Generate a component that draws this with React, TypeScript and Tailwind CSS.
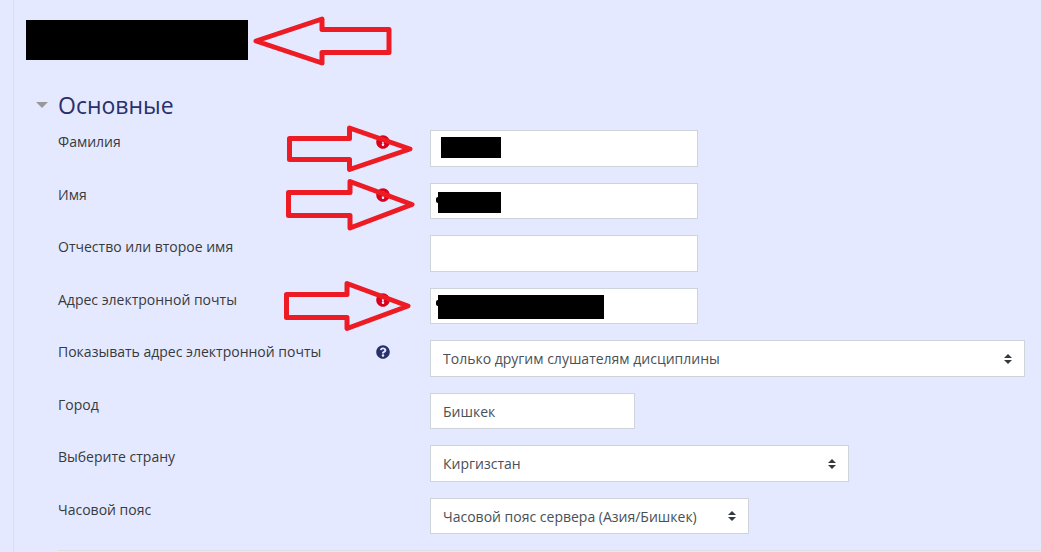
import { useState } from 'react';
import type { ReactNode } from 'react';
import { FaExclamationCircle, FaQuestionCircle } from 'react-icons/fa';

const controlClass =
  'h-full max-w-full border border-[#ced4da] bg-white px-3 text-[14px] text-[#495057] outline-none focus:border-[#80bdff]';

function Arrow({ points, className }: { points: string; className: string }) {
  return (
    <svg
      aria-hidden="true"
      width="144"
      height="56"
      viewBox="0 0 144 56"
      fill="none"
      stroke="#ed1c24"
      strokeWidth="5"
      strokeLinejoin="round"
      className={`pointer-events-none absolute z-10 ${className}`}
    >
      <polygon points={points} />
    </svg>
  );
}

function Required() {
  return (
    <span role="img" aria-label="Обязательное поле" className="text-[#d9001b]">
      <FaExclamationCircle size={14} />
    </span>
  );
}

type RowProps = {
  id: string;
  label: string;
  icon?: ReactNode;
  overlay?: ReactNode;
  children: ReactNode;
};

function Row({ id, label, icon, overlay, children }: RowProps) {
  return (
    <div className="relative grid h-9 grid-cols-[372px_minmax(0,1fr)] odd:h-[37px]">
      <div className="flex items-start justify-between pr-10">
        <label htmlFor={id} className="leading-6">
          {label}
        </label>
        <span className="flex h-6 items-center">{icon}</span>
      </div>
      <div className="relative flex">{children}</div>
      {overlay}
    </div>
  );
}

function TextField({ id, width, initial = '' }: { id: string; width: string; initial?: string }) {
  const [value, setValue] = useState(initial);
  return (
    <input
      id={id}
      type="text"
      value={value}
      onChange={(e) => setValue(e.target.value)}
      className={`${controlClass} ${width}`}
    />
  );
}

function SelectField({ id, width, option }: { id: string; width: string; option: string }) {
  return (
    <div className={`relative h-full max-w-full ${width}`}>
      <select id={id} className={`${controlClass} w-full appearance-none pr-8`}>
        <option>{option}</option>
      </select>
      <svg
        aria-hidden="true"
        viewBox="0 0 4 5"
        className="pointer-events-none absolute top-1/2 right-[13px] h-[10px] w-2 -translate-y-1/2 fill-[#343a40]"
      >
        <path d="M2 0L0 2h4zm0 5L0 3h4z" />
      </svg>
    </div>
  );
}

export default function App() {
  const [open, setOpen] = useState(true);
  return (
    <div className="min-h-screen bg-[#e5e9ff] pl-[13px] font-['Open_Sans','Noto_Sans',sans-serif] text-[14px] text-[#373a3c]">
      <main className="min-h-screen border-l border-[#dcdfea] pt-5">
        <header className="relative pl-3">
          <div className="h-10 w-[222px] bg-black" />
          <Arrow className="-top-1.5 left-[238px]" points="4,27 70,5 70,15.5 137,15.5 137,38.5 70,38.5 70,49" />
        </header>

        <form className="mt-[27px] pl-[22px]" onSubmit={(e) => e.preventDefault()}>
          <h2 className="text-[23px] leading-9 text-[#29306b]">
            <button
              type="button"
              aria-expanded={open}
              onClick={() => setOpen(!open)}
              className="flex items-center gap-2.5"
            >
              <svg aria-hidden="true" width="12" height="6" viewBox="0 0 12 6" fill="#999">
                <path d="M0 0h12L6 6z" />
              </svg>
              Основные
            </button>
          </h2>

          {open && (
            <div className="mt-[7px] ml-[22px]">
              <div className="flex flex-col gap-4 pr-4">
                <Row
                  id="lastname"
                  label="Фамилия"
                  icon={<Required />}
                  overlay={
                    <Arrow
                      className="-top-2 left-[226px]"
                      points="5.5,16.5 65.5,16.5 65.5,6 126,27 65.5,47.5 65.5,37.5 5.5,37.5"
                    />
                  }
                >
                  <TextField id="lastname" width="w-[268px]" />
                  <span className="absolute top-[7px] left-[11px] h-[21px] w-[60px] bg-black" />
                </Row>
                <Row
                  id="firstname"
                  label="Имя"
                  icon={<Required />}
                  overlay={
                    <Arrow
                      className="-top-2 left-[226px]"
                      points="4.5,17.5 66,17.5 66,6.5 128,29.5 66,53 66,40.5 4.5,40.5"
                    />
                  }
                >
                  <TextField id="firstname" width="w-[268px]" />
                  <span className="absolute top-[9px] left-2 h-[21px] w-[63px] bg-black" />
                  <span className="absolute top-3.5 left-1.5 h-1.5 w-1 rounded-full bg-black" />
                </Row>
                <Row id="middlename" label="Отчество или второе имя">
                  <TextField id="middlename" width="w-[268px]" />
                </Row>
                <Row
                  id="email"
                  label="Адрес электронной почты"
                  icon={<Required />}
                  overlay={
                    <Arrow
                      className="-top-2 left-[226px]"
                      points="2.5,14.5 63,14.5 63,3.5 124,26 63,48.5 63,37.5 2.5,37.5"
                    />
                  }
                >
                  <TextField id="email" width="w-[268px]" />
                  <span className="absolute top-[7px] left-2 h-6 w-[166px] bg-black" />
                  <span className="absolute top-3 left-1.5 h-1.5 w-1 rounded-full bg-black" />
                </Row>
                <Row
                  id="maildisplay"
                  label="Показывать адрес электронной почты"
                  icon={
                    <button type="button" aria-label="Справка" className="text-[#29306b]">
                      <FaQuestionCircle size={14} />
                    </button>
                  }
                >
                  <SelectField id="maildisplay" width="w-full" option="Только другим слушателям дисциплины" />
                </Row>
                <Row id="city" label="Город">
                  <TextField id="city" width="w-[205px]" initial="Бишкек" />
                </Row>
                <Row id="country" label="Выберите страну">
                  <SelectField id="country" width="w-[419px]" option="Киргизстан" />
                </Row>
                <Row id="timezone" label="Часовой пояс">
                  <SelectField id="timezone" width="w-[319px]" option="Часовой пояс сервера (Азия/Бишкек)" />
                </Row>
              </div>
              <hr className="mt-4 border-[#dcdfe6]" />
            </div>
          )}
        </form>
      </main>
    </div>
  );
}
